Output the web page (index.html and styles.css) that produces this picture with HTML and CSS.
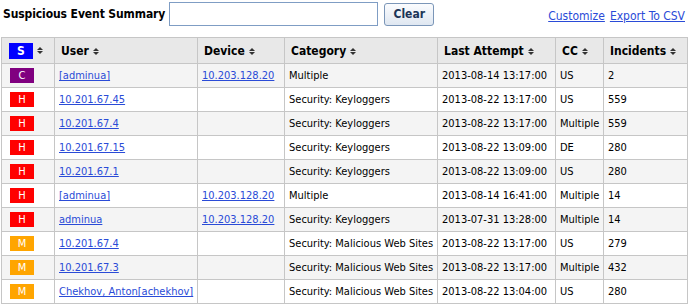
FILE: index.html
```html
<!DOCTYPE html>
<html lang="en">
<head>
    <meta charset="UTF-8">
    <title>Suspicious Event Summary</title>
    <link rel="stylesheet" href="styles.css">
</head>
<body>

<div class="toolbar">
    <h1 class="title">Suspicious Event Summary</h1>
    <input type="text" class="search">
    <button class="clear-btn">Clear</button>
    <div class="links">
        <a href="#">Customize</a>
        <a href="#">Export To CSV</a>
    </div>
</div>

<table class="events">
    <thead>
        <tr>
            <th class="col-sev"><span class="badge badge-s">S</span><span class="sort"></span></th>
            <th class="col-user">User<span class="sort"></span></th>
            <th class="col-device">Device<span class="sort"></span></th>
            <th class="col-cat">Category<span class="sort"></span></th>
            <th class="col-last">Last Attempt<span class="sort"></span></th>
            <th class="col-cc">CC<span class="sort"></span></th>
            <th class="col-inc">Incidents<span class="sort"></span></th>
        </tr>
    </thead>
    <tbody>
        <tr>
            <td><span class="badge badge-c">C</span></td>
            <td><a href="#">[adminua]</a></td>
            <td><a href="#">10.203.128.20</a></td>
            <td>Multiple</td>
            <td>2013-08-14 13:17:00</td>
            <td>US</td>
            <td>2</td>
        </tr>
        <tr>
            <td><span class="badge badge-h">H</span></td>
            <td><a href="#">10.201.67.45</a></td>
            <td></td>
            <td>Security: Keyloggers</td>
            <td>2013-08-22 13:17:00</td>
            <td>US</td>
            <td>559</td>
        </tr>
        <tr>
            <td><span class="badge badge-h">H</span></td>
            <td><a href="#">10.201.67.4</a></td>
            <td></td>
            <td>Security: Keyloggers</td>
            <td>2013-08-22 13:17:00</td>
            <td>Multiple</td>
            <td>559</td>
        </tr>
        <tr>
            <td><span class="badge badge-h">H</span></td>
            <td><a href="#">10.201.67.15</a></td>
            <td></td>
            <td>Security: Keyloggers</td>
            <td>2013-08-22 13:09:00</td>
            <td>DE</td>
            <td>280</td>
        </tr>
        <tr>
            <td><span class="badge badge-h">H</span></td>
            <td><a href="#">10.201.67.1</a></td>
            <td></td>
            <td>Security: Keyloggers</td>
            <td>2013-08-22 13:09:00</td>
            <td>US</td>
            <td>280</td>
        </tr>
        <tr>
            <td><span class="badge badge-h">H</span></td>
            <td><a href="#">[adminua]</a></td>
            <td><a href="#">10.203.128.20</a></td>
            <td>Multiple</td>
            <td>2013-08-14 16:41:00</td>
            <td>Multiple</td>
            <td>14</td>
        </tr>
        <tr>
            <td><span class="badge badge-h">H</span></td>
            <td><a href="#">adminua</a></td>
            <td><a href="#">10.203.128.20</a></td>
            <td>Security: Keyloggers</td>
            <td>2013-07-31 13:28:00</td>
            <td>Multiple</td>
            <td>14</td>
        </tr>
        <tr>
            <td><span class="badge badge-m">M</span></td>
            <td><a href="#">10.201.67.4</a></td>
            <td></td>
            <td>Security: Malicious Web Sites</td>
            <td>2013-08-22 13:17:00</td>
            <td>US</td>
            <td>279</td>
        </tr>
        <tr>
            <td><span class="badge badge-m">M</span></td>
            <td><a href="#">10.201.67.3</a></td>
            <td></td>
            <td>Security: Malicious Web Sites</td>
            <td>2013-08-22 13:17:00</td>
            <td>Multiple</td>
            <td>432</td>
        </tr>
        <tr>
            <td><span class="badge badge-m">M</span></td>
            <td><a href="#">Chekhov, Anton[achekhov]</a></td>
            <td></td>
            <td>Security: Malicious Web Sites</td>
            <td>2013-08-22 13:04:00</td>
            <td>US</td>
            <td>280</td>
        </tr>
    </tbody>
</table>

</body>
</html>
```

FILE: styles.css
```css
body {
    margin: 0;
    font-family: 'DejaVu Sans Condensed', 'DejaVu Sans', sans-serif;
    font-size: 11px;
    color: #000;
    background: #fff;
    overflow: hidden;
}

a {
    color: #2a4bd7;
    text-decoration: underline;
}

/* Верхняя панель */
.toolbar {
    display: flex;
    align-items: center;
    height: 24px;
    padding: 2px 4px 0 3px;
}

.title {
    margin: 0 4px 0 0;
    font-size: 12px;
    font-weight: bold;
    letter-spacing: -0.1px;
}

.search {
    width: 205px;
    height: 20px;
    margin: 0;
    padding: 1px;
    border: 1px solid #7f9dc4;
    font: inherit;
}

.clear-btn {
    margin-left: 6px;
    width: 50px;
    height: 23px;
    border: 1px solid #7b96b8;
    border-radius: 3px;
    background: linear-gradient(#fbfcfe, #dfe7f1);
    color: #1c3557;
    font-family: inherit;
    font-size: 12px;
    font-weight: bold;
    padding: 0;
}

.links {
    margin-left: auto;
    display: flex;
    gap: 5px;
    font-size: 12px;
    padding-top: 4px;
}

/* Таблица */
.events {
    margin: 11px 0 0 1px;
    width: 687px;
    border-collapse: collapse;
    border: 1px solid #c6c6c6;
}

.events th,
.events td {
    border: 1px solid #c6c6c6;
    text-align: left;
    white-space: nowrap;
}

.events th {
    height: 25px;
    padding: 0 0 0 6px;
    background: #e8e8e8;
    font-size: 12px;
    font-weight: bold;
}

.events td {
    height: 23px;
    padding: 0 0 0 4px;
}

.events tbody tr:nth-child(odd) td {
    background: #f4f4f4;
}

.col-sev { width: 45px; }
.col-user { width: 136px; }
.col-device { width: 80px; }
.col-cat { width: 146px; }
.col-last { width: 111px; }
.col-cc { width: 41px; }

.events th.col-sev {
    padding-left: 7px;
}

.events td:first-child {
    padding-left: 8px;
}

.badge {
    display: inline-block;
    width: 24px;
    height: 15px;
    line-height: 15px;
    text-align: center;
    color: #fff;
    vertical-align: middle;
}

.badge-s {
    height: 16px;
    line-height: 16px;
    background: #0000ff;
    font-size: 12px;
    font-weight: bold;
}

.badge-c { background: #800080; }
.badge-h { background: #ff0000; }
.badge-m { background: #ffa500; }

/* Стрелки сортировки */
.sort {
    display: inline-flex;
    flex-direction: column;
    gap: 1px;
    margin-left: 4px;
    vertical-align: middle;
}

.sort::before,
.sort::after {
    content: "";
    width: 0;
    height: 0;
    border-left: 3px solid transparent;
    border-right: 3px solid transparent;
}

.sort::before {
    border-bottom: 3px solid #333;
}

.sort::after {
    border-top: 3px solid #333;
}
```
